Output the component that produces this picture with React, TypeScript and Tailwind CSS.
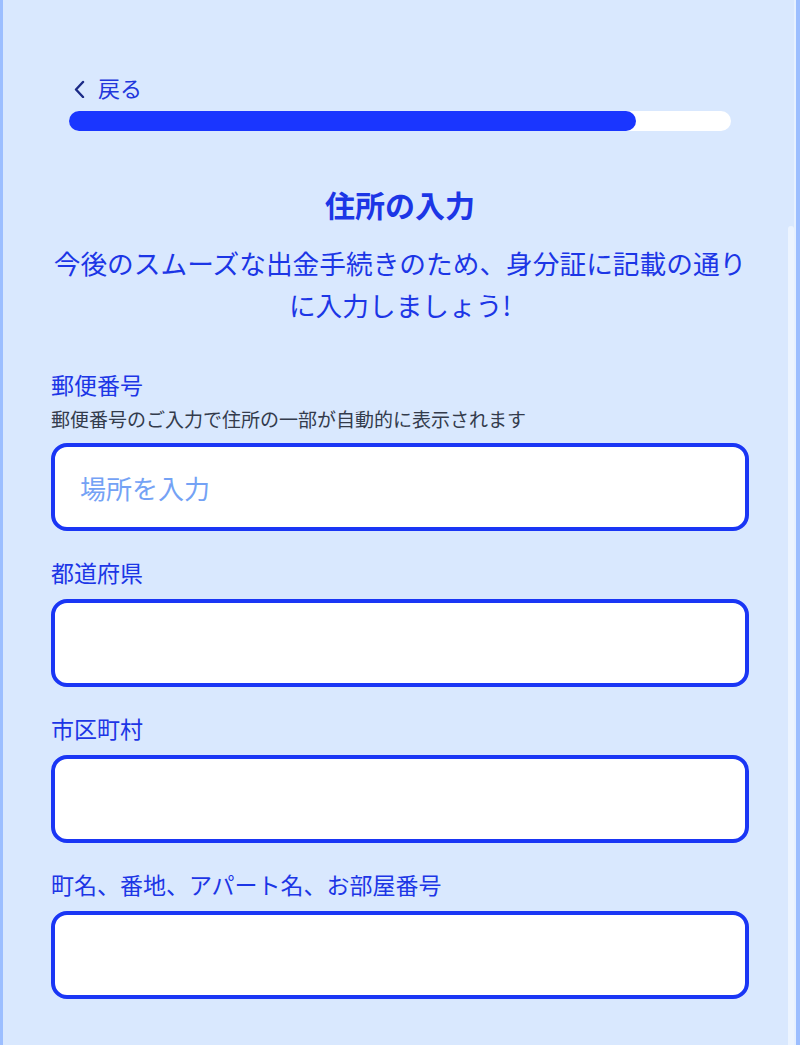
import React from "react";

const font = { fontFamily: '"Noto Sans CJK JP", "Noto Sans", sans-serif' };

function Field({ label, hint, placeholder }: { label: string; hint?: string; placeholder?: string }) {
  return (
    <div className="flex flex-col">
      <div className="text-[23px] leading-[30px] text-[#1c36e6]">{label}</div>
      {hint && <div className="mt-[7px] text-[19px] leading-[26px] text-[#333b4c]">{hint}</div>}
      <input
        className={`${hint ? "mt-[11px]" : "mt-[12px]"} h-[88px] w-full rounded-[16px] border-[4px] border-[#1a36f5] bg-white px-[25px] text-[26px] text-[#1a2450] outline-none placeholder:text-[#74a2f5]`}
        style={font}
        placeholder={placeholder}
      />
    </div>
  );
}

export default function App() {
  return (
    <div className="relative flex h-[1045px] w-[800px] overflow-hidden bg-[#d9e8fe]" style={font}>
      <div className="w-[3px] shrink-0 bg-[#9cbeff]" />
      <main className="flex min-w-0 flex-1 flex-col pl-[48px] pr-[51px]">
        <div className="flex flex-col px-[18px] pt-[75px]">
          <button className="flex h-[24px] items-center gap-[12px] self-start pl-[4px] text-[22px] leading-[24px] text-[#2237dc]">
            <svg width="13" height="18" viewBox="0 0 13 18" fill="none" className="mt-[3px]">
              <polyline points="10,2 3,9.5 10,17" stroke="#1b2a86" strokeWidth="2.4" strokeLinecap="round" strokeLinejoin="round" />
            </svg>
            <span>戻る</span>
          </button>
          <div className="mt-[12px] h-[20px] w-full rounded-full bg-white">
            <div className="h-[20px] w-[567px] rounded-full bg-[#1a36ff]" />
          </div>
        </div>
        <h1 className="mt-[53px] text-center text-[30px] font-bold leading-[40px] text-[#1c36e6]">住所の入力</h1>
        <p className="mt-[18px] text-center text-[26.7px] leading-[42px] text-[#1c36e6]">
          今後のスムーズな出金手続きのため、身分証に記載の通り
          <br />
          に入力しましょう!
        </p>
        <div className="mt-[43px] flex flex-col gap-[26px]">
          <Field label="郵便番号" hint="郵便番号のご入力で住所の一部が自動的に表示されます" placeholder="場所を入力" />
          <Field label="都道府県" />
          <Field label="市区町村" />
          <Field label="町名、番地、アパート名、お部屋番号" />
        </div>
      </main>
      <div className="absolute bottom-0 right-[4px] top-0 w-[2px] bg-[#e6f0ff]" />
      <div className="absolute bottom-0 right-0 top-0 w-[4px] bg-[#9cbeff]" />
      <div className="absolute bottom-0 right-[6px] top-[226px] w-[6px] rounded-t-full bg-[#ecf4ff]" />
    </div>
  );
}
